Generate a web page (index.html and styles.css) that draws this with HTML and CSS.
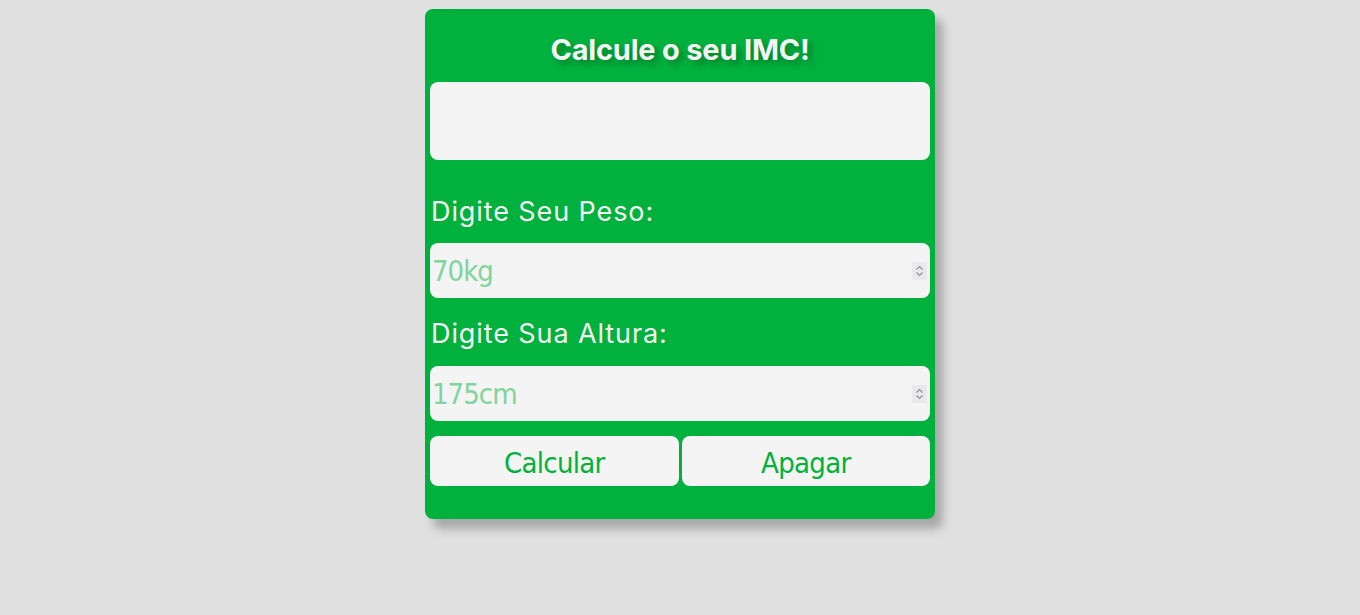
FILE: index.html
```html
<!DOCTYPE html>
<html lang="pt-BR">
<head>
<meta charset="utf-8">
<title>Calcule o seu IMC!</title>
<link rel="stylesheet" href="styles.css">
</head>
<body>
<main class="card">
  <h1 class="title">Calcule o seu IMC!</h1>
  <div class="result"></div>
  <label class="label label-first" for="peso">Digite Seu Peso:</label>
  <div class="field-wrap">
    <input class="field" id="peso" type="number" placeholder="70kg">
    <svg class="spin" width="15" height="18" viewBox="0 0 15 18" aria-hidden="true">
      <rect width="15" height="18" fill="#e9e9ed"/>
      <path d="M4.5 7.5 L7.5 4.5 L10.5 7.5" fill="none" stroke="#8f8f9d" stroke-width="1.2"/>
      <path d="M4.5 10.5 L7.5 13.5 L10.5 10.5" fill="none" stroke="#8f8f9d" stroke-width="1.2"/>
    </svg>
  </div>
  <label class="label label-second" for="altura">Digite Sua Altura:</label>
  <div class="field-wrap">
    <input class="field" id="altura" type="number" placeholder="175cm">
    <svg class="spin" width="15" height="18" viewBox="0 0 15 18" aria-hidden="true">
      <rect width="15" height="18" fill="#e9e9ed"/>
      <path d="M4.5 7.5 L7.5 4.5 L10.5 7.5" fill="none" stroke="#8f8f9d" stroke-width="1.2"/>
      <path d="M4.5 10.5 L7.5 13.5 L10.5 10.5" fill="none" stroke="#8f8f9d" stroke-width="1.2"/>
    </svg>
  </div>
  <div class="actions">
    <button class="btn" type="button">Calcular</button>
    <button class="btn" type="button">Apagar</button>
  </div>
</main>
</body>
</html>
```
FILE: styles.css
```css
html, body {
  margin: 0;
  padding: 0;
  background: #e0e0e0;
  height: 100%;
}
body {
  font-family: Inter, Roboto, "Liberation Sans", sans-serif;
  padding-top: 9px;
  box-sizing: border-box;
}
.card {
  width: 510px;
  margin: 0 auto;
  background: #00b13d;
  border-radius: 8px;
  box-shadow: 8px 10px 10px rgba(0, 0, 0, 0.25);
  padding: 0 5px 33px;
  box-sizing: border-box;
  display: flex;
  flex-direction: column;
}
.title {
  margin: 0;
  padding-top: 23px;
  height: 73px;
  box-sizing: border-box;
  text-align: center;
  font-size: 29px;
  font-weight: 700;
  line-height: 36px;
  color: #f4f4f4;
  text-shadow: 4px 4px 6px rgba(0, 0, 0, 0.3);
  letter-spacing: -0.2px;
}
.result {
  height: 78px;
  background: #f4f4f4;
  border-radius: 8px;
}
.label {
  display: block;
  color: #f4f4f4;
  font-size: 27px;
  line-height: 34px;
  letter-spacing: 0.9px;
  padding-left: 1px;
}
.label-first {
  margin-top: 35px;
  margin-bottom: 14px;
}
.label-second {
  margin-top: 19px;
  margin-bottom: 15px;
}
.field-wrap {
  position: relative;
}
.field {
  display: block;
  width: 100%;
  height: 55px;
  box-sizing: border-box;
  border: none;
  border-radius: 8px;
  background: #f4f4f4;
  padding: 0 2px;
  font-family: "DejaVu Sans Condensed", "DejaVu Sans", sans-serif;
  font-size: 29px;
  letter-spacing: -1px;
  color: #00b13d;
  outline: none;
  -moz-appearance: textfield;
  appearance: textfield;
}
.field::-webkit-outer-spin-button,
.field::-webkit-inner-spin-button {
  -webkit-appearance: none;
  margin: 0;
}
.field::placeholder {
  color: #7fd59d;
}
.spin {
  position: absolute;
  right: 3px;
  top: 19px;
  display: block;
}
.actions {
  display: flex;
  gap: 3px;
  margin-top: 15px;
}
.btn {
  flex: 1;
  height: 50px;
  border: none;
  border-radius: 8px;
  background: #f4f4f4;
  color: #00b13d;
  font-family: "DejaVu Sans Condensed", "DejaVu Sans", sans-serif;
  font-size: 29px;
  letter-spacing: -0.7px;
  padding: 3px 0 0;
  cursor: pointer;
}
```
